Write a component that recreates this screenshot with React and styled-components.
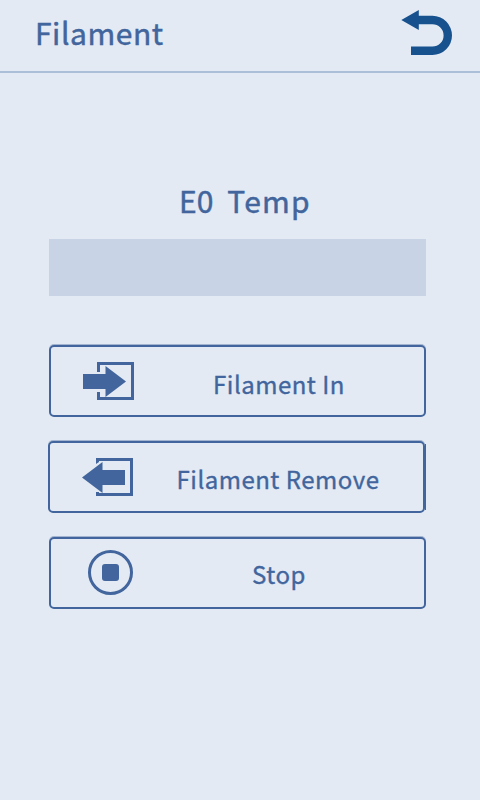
import React from "react";
import styled, { createGlobalStyle } from "styled-components";

const ink = "#41659c";

const GlobalStyle = createGlobalStyle`
  *, *::before, *::after { box-sizing: border-box; }
  body { margin: 0; background: #e3eaf4; }
`;

const Screen = styled.main`
  width: 480px;
  height: 800px;
  display: flex;
  flex-direction: column;
  overflow: hidden;
  background: #e3eaf4;
  color: ${ink};
  font-family: "Noto Sans CJK SC", "Noto Sans", sans-serif;
`;

const Header = styled.header`
  height: 73px;
  flex: none;
  display: flex;
  justify-content: space-between;
  align-items: flex-start;
  padding: 0 27px 0 35px;
  border-bottom: 2px solid #abc0d8;
`;

const Title = styled.h1`
  margin: 10px 0 0;
  font-size: 30px;
  line-height: 44px;
  font-weight: 400;
  -webkit-text-stroke: 0.45px ${ink};
  letter-spacing: 0.55px;
`;

const BackButton = styled.button`
  margin: 10px 0 0;
  padding: 0;
  border: 0;
  background: none;
  line-height: 0;
`;

const Content = styled.section`
  display: flex;
  flex-direction: column;
  padding: 105px 54px 0 49px;
`;

const Heading = styled.h2`
  display: flex;
  gap: 14px;
  margin: 0 0 17px;
  padding-left: 130px;
  font-size: 30px;
  line-height: 44px;
  font-weight: 400;
  -webkit-text-stroke: 0.45px ${ink};
`;

const Word = styled.span`
  letter-spacing: ${(p) => p.$spacing}px;
`;

const TempField = styled.div`
  width: 377px;
  height: 57px;
  background: #c8d3e6;
`;

const Actions = styled.div`
  display: flex;
  flex-direction: column;
  gap: 24px;
  margin-top: 49px;
`;

const ActionButton = styled.button`
  position: relative;
  display: flex;
  align-items: flex-start;
  width: 377px;
  height: 72px;
  padding: 0;
  border: 2px solid ${ink};
  border-radius: 5px;
  background: transparent;
  color: inherit;
  font-family: inherit;
  margin-left: ${(p) => (p.$raised ? -1 : 0)}px;
  box-shadow: 0 -1px 0 0 rgba(65, 101, 156, 0.4);

  &::after {
    content: "";
    display: ${(p) => (p.$raised ? "block" : "none")};
    position: absolute;
    top: 1px;
    bottom: 1px;
    right: -3px;
    width: 1px;
    background: ${ink};
  }
`;

const Icon = styled.svg`
  flex: none;
  width: 56px;
  height: 50px;
  margin: 10px 0 0 29px;
`;

const Label = styled.span`
  width: 224px;
  margin: ${(p) => p.$top}px 0 0 31px;
  font-size: 24px;
  line-height: 36px;
  font-weight: 400;
  -webkit-text-stroke: 0.35px ${ink};
  letter-spacing: 0.5px;
  text-align: center;
  white-space: nowrap;
`;

const FilamentInIcon = () => (
  <Icon viewBox="0 0 56 50" fill={ink}>
    <path d="M17 15V5H54V43H17V35H20V40H51V8H20V15Z" />
    <path d="M3 17H25.5V9L46 24.5L25.5 40V32H3Z" />
  </Icon>
);

const FilamentRemoveIcon = () => (
  <Icon viewBox="0 0 56 50" fill={ink}>
    <path d="M17 11V5H54V43H17V39H20V40H51V8H20V9Z" />
    <path d="M3 24.5L23.5 9V17H46V32H23.5V40Z" />
  </Icon>
);

const StopIcon = () => (
  <Icon viewBox="0 0 56 50">
    <circle cx="30.5" cy="23.5" r="21" fill="none" stroke={ink} strokeWidth="3" />
    <rect x="22" y="15" width="17" height="17" rx="3" fill={ink} />
  </Icon>
);

export default function App() {
  return (
    <>
      <GlobalStyle />
      <Screen>
        <Header>
          <Title>Filament</Title>
          <BackButton aria-label="Back">
            <svg width="52" height="46" viewBox="0 0 52 46">
              <path
                d="M0.3 10L17.8 0V5.8H31.4A19.6 19.6 0 0 1 31.4 45H10V36.6H31.4A11.2 11.2 0 0 0 31.4 14.2H17.8V20Z"
                fill="#17528f"
              />
            </svg>
          </BackButton>
        </Header>
        <Content>
          <Heading>
            <Word $spacing={0}>E0</Word>
            <Word $spacing={1.2}>Temp</Word>
          </Heading>
          <TempField />
          <Actions>
            <ActionButton>
              <FilamentInIcon />
              <Label $top={19}>Filament In</Label>
            </ActionButton>
            <ActionButton $raised>
              <FilamentRemoveIcon />
              <Label $top={18}>Filament Remove</Label>
            </ActionButton>
            <ActionButton>
              <StopIcon />
              <Label $top={17}>Stop</Label>
            </ActionButton>
          </Actions>
        </Content>
      </Screen>
    </>
  );
}
